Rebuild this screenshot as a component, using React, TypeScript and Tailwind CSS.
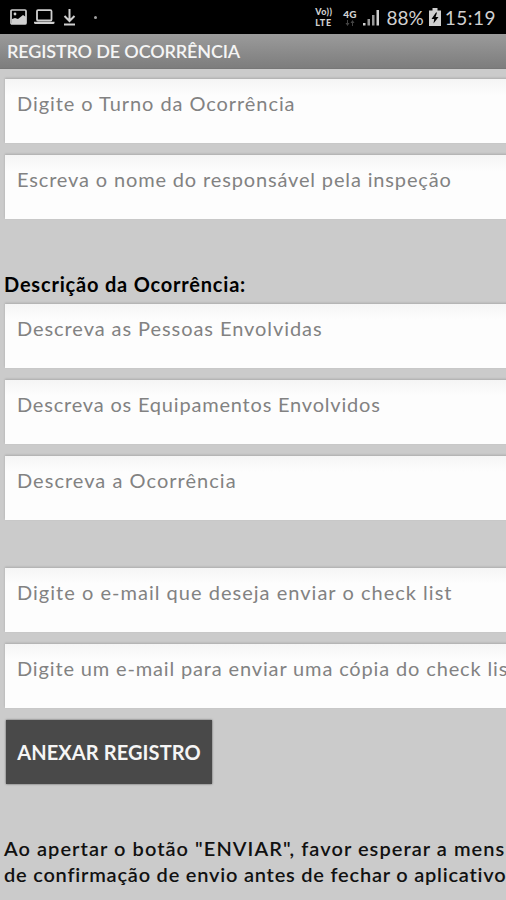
import { useState } from 'react';

type FieldProps = {
  placeholder: string;
  tracking: string;
};

function Field({ placeholder, tracking }: FieldProps) {
  const [value, setValue] = useState('');

  return (
    <input
      value={value}
      onChange={e => setValue(e.target.value)}
      placeholder={placeholder}
      className={`block h-16 w-[700px] bg-linear-to-b from-[#f5f5f5] to-[#fdfdfd] to-25% pl-3 pb-4 text-xl text-gray-800 outline-none placeholder:text-[#828282] shadow-[0_-1px_2px_#aaa] ${tracking}`}
    />
  );
}

function StatusBar() {
  return (
    <div className="flex h-[34px] shrink-0 items-center bg-black text-[#d0d0d0]">
      <svg width="17" height="16" viewBox="0 0 17 16" className="ml-2.5">
        <rect x="1" y="1" width="15" height="14" rx="1" fill="none" stroke="currentColor" strokeWidth="1.7" />
        <circle cx="5" cy="5" r="1.4" fill="currentColor" />
        <path d="M2 10l3-1 3 1 5-4 3 2v7H2z" fill="currentColor" />
      </svg>
      <svg width="21" height="16" viewBox="0 0 21 16" className="ml-[7px]">
        <rect x="3" y="1.2" width="14.5" height="10.3" rx="1" fill="none" stroke="currentColor" strokeWidth="1.8" />
        <path d="M0 12.8h20.5v1.4l-1 .8H1l-1-.8z" fill="currentColor" />
      </svg>
      <svg width="13" height="18" viewBox="0 0 13 18" className="ml-2" fill="none" stroke="currentColor" strokeWidth="2">
        <path d="M6.5 1v12M1.5 8l5 5 5-5M1 16.5h11" />
      </svg>
      <span className="ml-[18px] size-[3px] rounded-full bg-[#a0a0a0]" />

      <div className="ml-auto flex items-center pr-2.5">
        <div className="mr-[11px] flex flex-col text-[9px] font-black">
          <span className="h-[11px] leading-[11px] tracking-[0.4px]">Vo))</span>
          <span className="h-[11px] leading-[11px] tracking-[0.7px]">LTE</span>
        </div>
        <div className="mr-[7px] flex flex-col items-center">
          <span className="text-[10px] leading-[12px] font-black">4G</span>
          <svg width="10" height="6" viewBox="0 0 10 6" fill="#444">
            <path d="M2 0h1v3h1.5L2.5 6 .5 3H2zM7 6h1V3h1.5L7.5 0l-2 3H7z" />
          </svg>
        </div>
        <svg width="17" height="17" viewBox="0 0 17 17" className="mr-1.5" fill="currentColor">
          <rect x="0" y="14" width="2.5" height="2.5" />
          <rect x="4.5" y="10" width="2.5" height="6.5" fill="#999" />
          <rect x="9" y="6" width="2.5" height="10.5" fill="#999" />
          <rect x="13.5" y="1" width="2.5" height="15.5" />
        </svg>
        <span className="text-[19px] leading-none">88%</span>
        <svg width="12" height="18" viewBox="0 0 12 18" className="mr-1 ml-[5px]">
          <path d="M3.5 0h5v2.5H12V18H0V2.5h3.5z" fill="currentColor" />
          <path d="M7 4.5L2.5 11h2.7L4.5 15.5 9.5 9H6.6L8 4.5z" fill="#000" />
        </svg>
        <span className="text-[19px] leading-none tracking-[0.5px]">15:19</span>
      </div>
    </div>
  );
}

export default function App() {
  return (
    <div className="flex h-[900px] w-[506px] flex-col overflow-hidden bg-[#cbcbcb] font-[Lato,sans-serif]">
      <StatusBar />

      <header className="flex h-[35px] shrink-0 items-center border-b border-[#777] bg-linear-to-b from-[#9b9b9b] to-[#7d7d7d] pl-[7px]">
        <h1 className="text-lg font-semibold tracking-[-0.15px] whitespace-nowrap text-[#f5f5f5]">REGISTRO DE OCORRÊNCIA</h1>
      </header>

      <main className="flex flex-col pt-2.5 pl-[5px]">
        <div className="flex flex-col gap-3">
          <Field placeholder="Digite o Turno da Ocorrência" tracking="tracking-[0.93px]" />
          <Field placeholder="Escreva o nome do responsável pela inspeção" tracking="tracking-[0.85px]" />
        </div>

        <h2 className="mt-[51px] -ml-px h-[34px] text-xl leading-[28px] font-bold tracking-[0.8px] text-black">
          Descrição da Ocorrência:
        </h2>
        <div className="flex flex-col gap-3">
          <Field placeholder="Descreva as Pessoas Envolvidas" tracking="tracking-[0.93px]" />
          <Field placeholder="Descreva os Equipamentos Envolvidos" tracking="tracking-[0.8px]" />
          <Field placeholder="Descreva a Ocorrência" tracking="tracking-[1.03px]" />
        </div>

        {/* E-mail recipients */}
        <div className="mt-12 flex flex-col gap-3">
          <Field placeholder="Digite o e-mail que deseja enviar o check list" tracking="tracking-[1.02px]" />
          <Field placeholder="Digite um e-mail para enviar uma cópia do check list" tracking="tracking-[0.85px]" />
        </div>

        <button className="mt-3 ml-px h-16 w-[206px] bg-[#494949] text-xl font-bold tracking-[0.1px] whitespace-nowrap text-[#f5f5f5] shadow-[0_0_2px_#555]">
          ANEXAR REGISTRO
        </button>

        <p className="mt-[51px] -ml-px text-xl leading-[26px] font-semibold whitespace-nowrap text-[#111]">
          <span className="block tracking-[1.05px]">Ao apertar o botão "ENVIAR", favor esperar a mens</span>
          <span className="block tracking-[0.78px]">de confirmação de envio antes de fechar o aplicativo</span>
        </p>
      </main>
    </div>
  );
}
